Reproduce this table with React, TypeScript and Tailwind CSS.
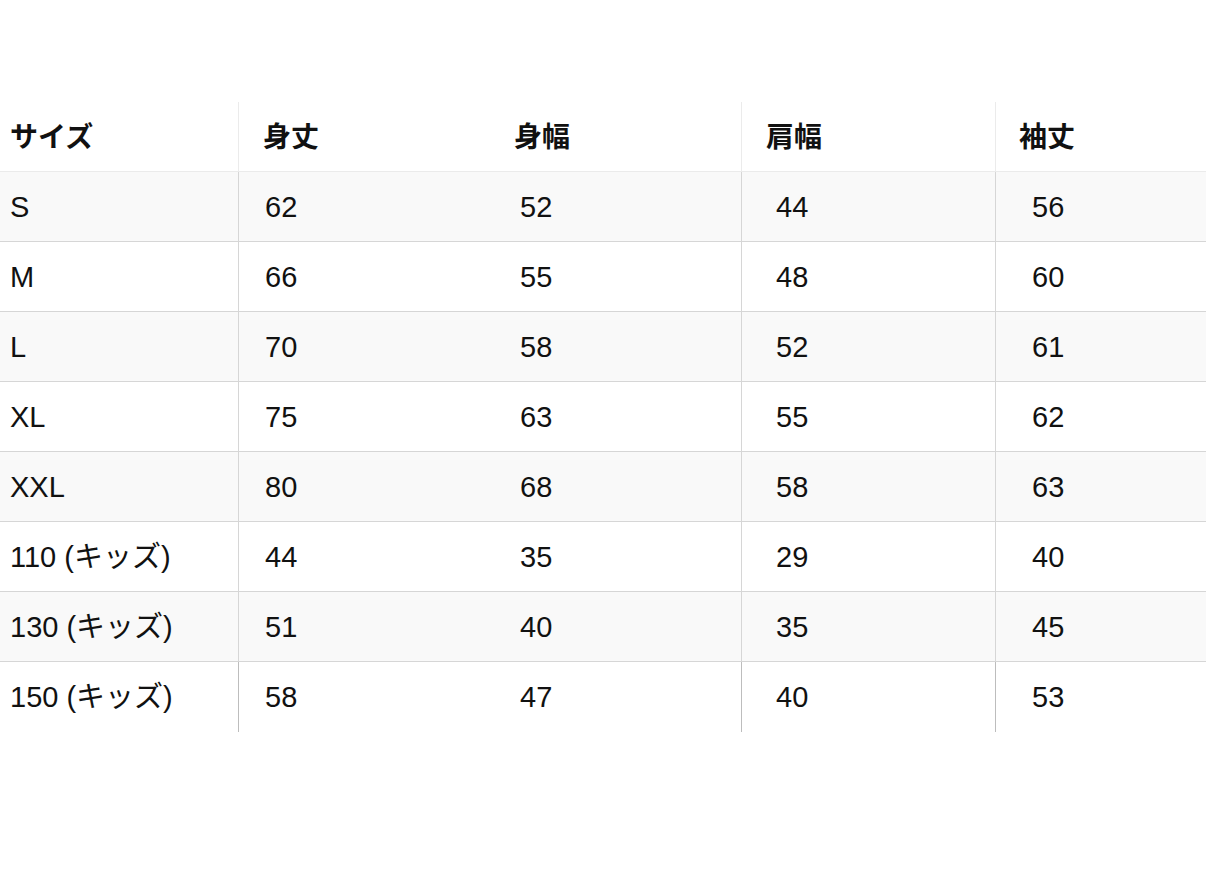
import React from 'react';

const headers = ['サイズ', '身丈', '身幅', '肩幅', '袖丈'];

const rows: string[][] = [
  ['S', '62', '52', '44', '56'],
  ['M', '66', '55', '48', '60'],
  ['L', '70', '58', '52', '61'],
  ['XL', '75', '63', '55', '62'],
  ['XXL', '80', '68', '58', '63'],
  ['110 (キッズ)', '44', '35', '29', '40'],
  ['130 (キッズ)', '51', '40', '35', '45'],
  ['150 (キッズ)', '58', '47', '40', '53'],
];

// per column: border and padding for header / body cells
const colBorder = ['border-r border-[#bdbdbd]', '', 'border-r border-[#bdbdbd]', 'border-r border-[#bdbdbd]', ''];
const headPad = ['pl-[10px]', 'pl-[24px]', 'pl-[25px]', 'pl-[24px]', 'pl-[23px]'];
const bodyPad = ['pl-[10px]', 'pl-[26px]', 'pl-[31px]', 'pl-[34px]', 'pl-[36px]'];

const App: React.FC = () => {
  return (
    <div
      className="min-h-[872px] w-[1206px] overflow-hidden bg-white pt-[102px] text-[#111]"
      style={{ fontFamily: '"Liberation Sans", "Noto Sans CJK JP", sans-serif' }}
    >
      <div className="grid grid-cols-[239px_250px_253px_254px_1fr]">
        {headers.map((h, i) => (
          <div
            key={h}
            className={`flex h-[70px] items-center pt-[2px] border-b border-[#ebebeb] text-[28px] font-bold ${colBorder[i]} ${headPad[i]}`}
          >
            {h}
          </div>
        ))}
        {rows.map((row, r) =>
          row.map((cell, i) => (
            <div
              key={`${r}-${i}`}
              className={`flex h-[70px] items-center pt-[2px] text-[29px] ${colBorder[i]} ${bodyPad[i]} ${
                r % 2 === 0 ? 'bg-[#f9f9f9]' : 'bg-white'
              } ${r < rows.length - 1 ? 'border-b border-[#d6d6d6]' : ''}`}
            >
              {cell}
            </div>
          ))
        )}
      </div>
    </div>
  );
};

export default App;
